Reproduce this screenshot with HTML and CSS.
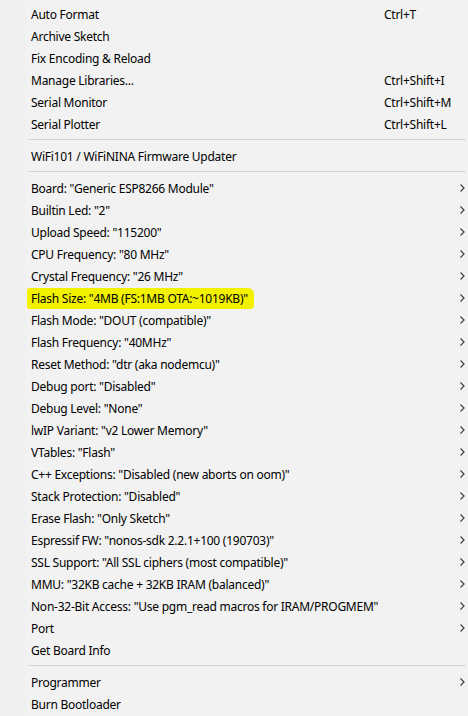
FILE: index.html
```html
<!DOCTYPE html>
<html>
<head>
<meta charset="utf-8">
<link rel="stylesheet" href="styles.css">
</head>
<body>
<div class="menu">
  <div class="item"><span class="label">Auto Format</span><span class="key">Ctrl+T</span></div>
  <div class="item"><span class="label">Archive Sketch</span></div>
  <div class="item"><span class="label">Fix Encoding &amp; Reload</span></div>
  <div class="item"><span class="label">Manage Libraries...</span><span class="key">Ctrl+Shift+I</span></div>
  <div class="item"><span class="label">Serial Monitor</span><span class="key">Ctrl+Shift+M</span></div>
  <div class="item"><span class="label">Serial Plotter</span><span class="key">Ctrl+Shift+L</span></div>
  <div class="sep"></div>
  <div class="item"><span class="label">WiFi101 / WiFiNINA Firmware Updater</span></div>
  <div class="sep"></div>
  <div class="item sub"><span class="label">Board: "Generic ESP8266 Module"</span><svg class="chev" width="5" height="8" viewBox="0 0 5 8"><path d="M0.5 0.5 L4 4 L0.5 7.5" fill="none" stroke="#404040" stroke-width="1.2"/></svg></div>
  <div class="item sub"><span class="label">Builtin Led: "2"</span><svg class="chev" width="5" height="8" viewBox="0 0 5 8"><path d="M0.5 0.5 L4 4 L0.5 7.5" fill="none" stroke="#404040" stroke-width="1.2"/></svg></div>
  <div class="item sub"><span class="label">Upload Speed: "115200"</span><svg class="chev" width="5" height="8" viewBox="0 0 5 8"><path d="M0.5 0.5 L4 4 L0.5 7.5" fill="none" stroke="#404040" stroke-width="1.2"/></svg></div>
  <div class="item sub"><span class="label">CPU Frequency: "80 MHz"</span><svg class="chev" width="5" height="8" viewBox="0 0 5 8"><path d="M0.5 0.5 L4 4 L0.5 7.5" fill="none" stroke="#404040" stroke-width="1.2"/></svg></div>
  <div class="item sub"><span class="label">Crystal Frequency: "26 MHz"</span><svg class="chev" width="5" height="8" viewBox="0 0 5 8"><path d="M0.5 0.5 L4 4 L0.5 7.5" fill="none" stroke="#404040" stroke-width="1.2"/></svg></div>
  <div class="item sub"><span class="label hl">Flash Size: "4MB (FS:1MB OTA:~1019KB)"</span><svg class="chev" width="5" height="8" viewBox="0 0 5 8"><path d="M0.5 0.5 L4 4 L0.5 7.5" fill="none" stroke="#404040" stroke-width="1.2"/></svg></div>
  <div class="item sub"><span class="label">Flash Mode: "DOUT (compatible)"</span><svg class="chev" width="5" height="8" viewBox="0 0 5 8"><path d="M0.5 0.5 L4 4 L0.5 7.5" fill="none" stroke="#404040" stroke-width="1.2"/></svg></div>
  <div class="item sub"><span class="label">Flash Frequency: "40MHz"</span><svg class="chev" width="5" height="8" viewBox="0 0 5 8"><path d="M0.5 0.5 L4 4 L0.5 7.5" fill="none" stroke="#404040" stroke-width="1.2"/></svg></div>
  <div class="item sub"><span class="label">Reset Method: "dtr (aka nodemcu)"</span><svg class="chev" width="5" height="8" viewBox="0 0 5 8"><path d="M0.5 0.5 L4 4 L0.5 7.5" fill="none" stroke="#404040" stroke-width="1.2"/></svg></div>
  <div class="item sub"><span class="label">Debug port: "Disabled"</span><svg class="chev" width="5" height="8" viewBox="0 0 5 8"><path d="M0.5 0.5 L4 4 L0.5 7.5" fill="none" stroke="#404040" stroke-width="1.2"/></svg></div>
  <div class="item sub"><span class="label">Debug Level: "None"</span><svg class="chev" width="5" height="8" viewBox="0 0 5 8"><path d="M0.5 0.5 L4 4 L0.5 7.5" fill="none" stroke="#404040" stroke-width="1.2"/></svg></div>
  <div class="item sub"><span class="label">lwIP Variant: "v2 Lower Memory"</span><svg class="chev" width="5" height="8" viewBox="0 0 5 8"><path d="M0.5 0.5 L4 4 L0.5 7.5" fill="none" stroke="#404040" stroke-width="1.2"/></svg></div>
  <div class="item sub"><span class="label">VTables: "Flash"</span><svg class="chev" width="5" height="8" viewBox="0 0 5 8"><path d="M0.5 0.5 L4 4 L0.5 7.5" fill="none" stroke="#404040" stroke-width="1.2"/></svg></div>
  <div class="item sub"><span class="label">C++ Exceptions: "Disabled (new aborts on oom)"</span><svg class="chev" width="5" height="8" viewBox="0 0 5 8"><path d="M0.5 0.5 L4 4 L0.5 7.5" fill="none" stroke="#404040" stroke-width="1.2"/></svg></div>
  <div class="item sub"><span class="label">Stack Protection: "Disabled"</span><svg class="chev" width="5" height="8" viewBox="0 0 5 8"><path d="M0.5 0.5 L4 4 L0.5 7.5" fill="none" stroke="#404040" stroke-width="1.2"/></svg></div>
  <div class="item sub"><span class="label">Erase Flash: "Only Sketch"</span><svg class="chev" width="5" height="8" viewBox="0 0 5 8"><path d="M0.5 0.5 L4 4 L0.5 7.5" fill="none" stroke="#404040" stroke-width="1.2"/></svg></div>
  <div class="item sub"><span class="label">Espressif FW: "nonos-sdk 2.2.1+100 (190703)"</span><svg class="chev" width="5" height="8" viewBox="0 0 5 8"><path d="M0.5 0.5 L4 4 L0.5 7.5" fill="none" stroke="#404040" stroke-width="1.2"/></svg></div>
  <div class="item sub"><span class="label">SSL Support: "All SSL ciphers (most compatible)"</span><svg class="chev" width="5" height="8" viewBox="0 0 5 8"><path d="M0.5 0.5 L4 4 L0.5 7.5" fill="none" stroke="#404040" stroke-width="1.2"/></svg></div>
  <div class="item sub"><span class="label">MMU: "32KB cache + 32KB IRAM (balanced)"</span><svg class="chev" width="5" height="8" viewBox="0 0 5 8"><path d="M0.5 0.5 L4 4 L0.5 7.5" fill="none" stroke="#404040" stroke-width="1.2"/></svg></div>
  <div class="item sub"><span class="label">Non-32-Bit Access: "Use pgm_read macros for IRAM/PROGMEM"</span><svg class="chev" width="5" height="8" viewBox="0 0 5 8"><path d="M0.5 0.5 L4 4 L0.5 7.5" fill="none" stroke="#404040" stroke-width="1.2"/></svg></div>
  <div class="item sub"><span class="label">Port</span><svg class="chev" width="5" height="8" viewBox="0 0 5 8"><path d="M0.5 0.5 L4 4 L0.5 7.5" fill="none" stroke="#404040" stroke-width="1.2"/></svg></div>
  <div class="item"><span class="label">Get Board Info</span></div>
  <div class="sep"></div>
  <div class="item sub"><span class="label">Programmer</span><svg class="chev" width="5" height="8" viewBox="0 0 5 8"><path d="M0.5 0.5 L4 4 L0.5 7.5" fill="none" stroke="#404040" stroke-width="1.2"/></svg></div>
  <div class="item"><span class="label">Burn Bootloader</span></div>
</div>
</body>
</html>
```
FILE: styles.css
```css
html, body {
  margin: 0;
  padding: 0;
  background: #f2f2f2;
}
.menu {
  width: 468px;
  height: 716px;
  overflow: hidden;
  padding-top: 3px;
  box-sizing: border-box;
  background: linear-gradient(to right, #f0f0f0 0, #f0f0f0 26px, #f2f2f2 26px);
  font-family: "Noto Sans", "Open Sans", sans-serif;
  font-size: 12px;
  color: #000;
}
.item {
  height: 22px;
  display: flex;
  align-items: center;
  padding-left: 31px;
  position: relative;
}
.label {
  white-space: nowrap;
  letter-spacing: -0.25px;
}
.key {
  position: absolute;
  left: 384px;
  letter-spacing: -0.25px;
}
.chev {
  position: absolute;
  left: 460px;
  top: 7px;
}
.hl {
  background: #f2f200;
  margin-left: -4px;
  padding: 2px 6px 2px 4px;
  border-radius: 3px 6px 4px 2px;
}
.sep {
  height: 1px;
  background: #d7d7d7;
  margin: 4px 2px 5px 28px;
}
```
